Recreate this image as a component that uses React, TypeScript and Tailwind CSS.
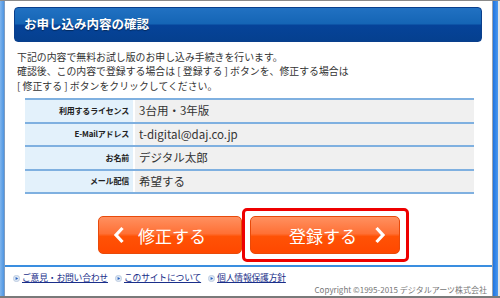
const jp = "font-['Noto_Sans_CJK_JP','Liberation_Sans',sans-serif]";

const ChevronLeft = () => (
  <svg width="12" height="18" viewBox="0 0 12 18">
    <path d="M9.5 2 L3 9 L9.5 16" fill="none" stroke="white" strokeWidth="3.2" />
  </svg>
);

const ChevronRight = () => (
  <svg width="12" height="18" viewBox="0 0 12 18">
    <path d="M2.5 2 L9 9 L2.5 16" fill="none" stroke="white" strokeWidth="3.2" />
  </svg>
);

const Bullet = () => (
  <svg width="7" height="7" viewBox="0 0 8 8" className="shrink-0">
    <circle cx="4" cy="4" r="3.6" fill="#dde7f3" stroke="#a3b7d2" strokeWidth="0.6" />
    <path d="M3 2.2 L6 4 L3 5.8 Z" fill="#2a62c0" />
  </svg>
);

const rows = [
  { label: "利用するライセンス", value: "3台用・3年版" },
  { label: "E-Mailアドレス", value: "t-digital@daj.co.jp" },
  { label: "お名前", value: "デジタル太郎" },
  { label: "メール配信", value: "希望する" },
];

const links = ["ご意見・お問い合わせ", "このサイトについて", "個人情報保護方針"];

export default function App() {
  return (
    <div className={`w-[500px] h-[298px] overflow-hidden bg-white flex flex-col ${jp}`}>
      <div className="h-px bg-[#8a8a8a]" />
      <div className="flex flex-1 min-h-0">
        {/* left frame */}
        <div className="w-[4px] bg-[linear-gradient(90deg,#7fb4ec,#4d95e2)]" />
        <div className="w-px bg-[#7f9cc0]" />

        <div className="flex-1 flex flex-col">
          {/* title bar */}
          <div className="mt-[6px] ml-[9px] mr-[10px] h-[35px] rounded-[4px] border border-[#0a3f8c] bg-[linear-gradient(#2171c2_0%,#1565b5_48%,#064399_52%,#05408f_100%)] flex items-center pl-[9px]">
            <h1 className="text-white font-bold text-[12.5px] leading-none [text-shadow:0_1px_1px_rgba(0,0,0,0.4)]">
              お申し込み内容の確認
            </h1>
          </div>

          {/* intro */}
          <div className="mt-[8px] pl-[12px] text-[9.9px] leading-[14.4px] text-[#333]">
            <p>下記の内容で無料お試し版のお申し込み手続きを行います。</p>
            <p>確認後、この内容で登録する場合は [ 登録する ] ボタンを、修正する場合は</p>
            <p>[ 修正する ] ボタンをクリックしてください。</p>
          </div>

          {/* table */}
          <div className="mt-[5px] ml-[20px] mr-[18px] border-b-2 border-[#7fb0e0]">
            {rows.map((r) => (
              <div key={r.label} className="flex h-[23.5px] border-t-2 border-[#7fb0e0]">
                <div className="w-[108px] bg-[#e3f1fb] flex items-center justify-end pr-[4px] text-[8px] font-bold text-[#222] tracking-[-0.2px]">
                  {r.label}
                </div>
                <div className="flex-1 bg-[#f0f0f0] border-l-2 border-white flex items-center pl-[4px] text-[11.5px] text-[#333]">
                  {r.value}
                </div>
              </div>
            ))}
          </div>

          {/* buttons */}
          <div className="mt-[14px] pl-[93px] flex items-center">
            <button className="w-[144px] h-[38px] rounded-[5px] border border-[#e84a0a] bg-[linear-gradient(#ff9060_0%,#ff7035_46%,#ff5206_54%,#ff4800_100%)] flex items-center pl-[14px] text-white text-[17px] leading-none">
              <ChevronLeft />
              <span className="ml-[13px]">修正する</span>
            </button>
            <div className="w-[167px] h-[54px] rounded-[5px] border-[3px] border-[#ee0000] flex items-center pl-[5px]">
              <button className="w-[150px] h-[38px] rounded-[5px] border border-[#e84a0a] bg-[linear-gradient(#ff9060_0%,#ff7035_46%,#ff5206_54%,#ff4800_100%)] flex items-center pl-[38px] text-white text-[17px] leading-none">
                <span>登録する</span>
                <span className="ml-[17px]">
                  <ChevronRight />
                </span>
              </button>
            </div>
          </div>

          {/* separator */}
          <div className="mt-[3px] h-[2px] bg-[#3a8ee0]" />

          {/* footer */}
          <div className="mt-[5px] pl-[8px] flex items-center gap-[7px] text-[8.8px] leading-[12px]">
            {links.map((l) => (
              <a key={l} href="#" className="flex items-center gap-[2px] text-[#1a2f8a] underline tracking-[-0.2px]">
                <Bullet />
                {l}
              </a>
            ))}
          </div>
          <div className="pr-[5px] text-right text-[8px] leading-[12px] text-[#777]">
            Copyright ©1995-2015 デジタルアーツ株式会社
          </div>
        </div>

        {/* right frame */}
        <div className="w-px bg-[#9aa4b0]" />
        <div className="w-[5px] bg-[linear-gradient(90deg,#1f74e0,#4b98ee)]" />
        <div className="w-[2px] bg-[#e6e6e6]" />
      </div>
      <div className="h-[2px] bg-[#7a7a7a]" />
    </div>
  );
}
